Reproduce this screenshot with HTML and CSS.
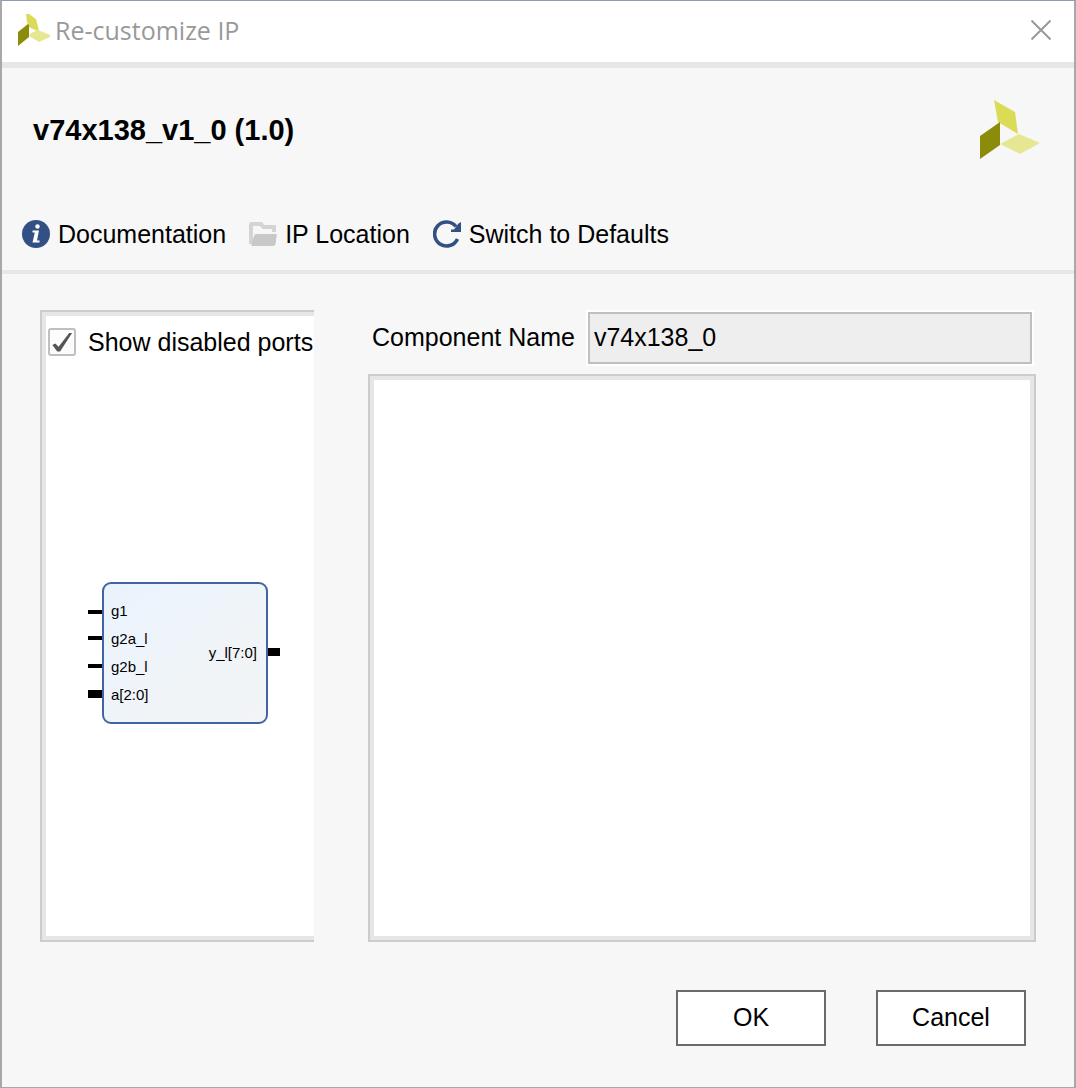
FILE: index.html
```html
<!DOCTYPE html>
<html lang="en">
<head>
    <meta charset="UTF-8">
    <meta name="viewport" content="width=device-width, initial-scale=1.0">
    <title>Re-customize IP</title>
    <link rel="stylesheet" href="styles.css">
</head>
<body>

    <div class="dialog">
        <!-- Title bar -->
        <div class="title-bar">
            <svg class="title-logo" viewBox="0 0 32 32" aria-hidden="true">
                <polygon points="8,0 11,0 18,5 21,17 19,17 11,13 9,8" fill="#dadc57"/>
                <polygon points="0,18 10,10 11,11 11,23 0,32" fill="#8c8c0b"/>
                <polygon points="11,22 13,19 20,16 32,21 32,23 21,28" fill="#e6e793"/>
            </svg>
            <span class="title-text">Re-customize IP</span>
            <button type="button" class="close-button" aria-label="Close">
                <svg width="20" height="20" viewBox="0 0 20 20" stroke="#999" stroke-width="2">
                    <path d="M0.5 0.5L19.5 19.5M19.5 0.5L0.5 19.5"/>
                </svg>
            </button>
        </div>

        <!-- IP name and toolbar -->
        <div class="header">
            <div class="header-top">
                <h1>v74x138_v1_0 (1.0)</h1>
                <svg width="60" height="60" viewBox="0 0 60 60" aria-hidden="true">
                    <polygon points="14,0 35,12 38,34 18,22" fill="#dadc57"/>
                    <polygon points="0,36 20,22 20,45 0,59" fill="#8c8c0b"/>
                    <polygon points="20,44 39,34 60,43 40,54" fill="#e6e793"/>
                </svg>
            </div>
            <div class="toolbar">
                <a href="#" class="tool">
                    <svg width="28" height="28" viewBox="0 0 28 28" aria-hidden="true">
                        <circle cx="14" cy="14" r="14" fill="#335084"/>
                        <circle cx="15.5" cy="6.5" r="2.2" fill="#fff"/>
                        <path d="M10.5 10.5H17L15 20.5H17.5V22.5H10.5L12.8 12.5H10.5Z" fill="#fff"/>
                    </svg>
                    Documentation
                </a>
                <a href="#" class="tool">
                    <svg width="28" height="28" viewBox="0 0 28 28" aria-hidden="true">
                        <path d="M2 24V5Q2 4 3 4H12L14.5 7H25V12" fill="none" stroke="#d4d4d4" stroke-width="4"/>
                        <path d="M7 14H27Q28 14 27.8 15L26.5 24Q26 26 24 26H3.5Q2 26 2.6 24L5 16Q5.5 14 7 14Z" fill="#c8c8c8"/>
                    </svg>
                    IP Location
                </a>
                <a href="#" class="tool">
                    <svg width="28" height="28" viewBox="0 0 28 28" aria-hidden="true">
                        <path d="M23 6.5A12 12 0 1 0 24.5 19" fill="none" stroke="#335084" stroke-width="3.6"/>
                        <path d="M28 2V12H18V9.5H21L25.5 3.5Z" fill="#335084"/>
                    </svg>
                    Switch to Defaults
                </a>
            </div>
        </div>

        <div class="content">
            <!-- Block symbol preview -->
            <div class="panel symbol-panel">
                <div class="panel-body">
                    <label class="check-row">
                        <input type="checkbox" checked>
                        Show disabled ports
                    </label>
                    <div class="symbol">
                        <svg width="192" height="142" viewBox="0 0 192 142">
                            <defs>
                                <linearGradient id="blockFill" x1="0" y1="0" x2="1" y2="1">
                                    <stop offset="0" stop-color="#e9f3fc"/>
                                    <stop offset="0.35" stop-color="#eef4fc"/>
                                    <stop offset="0.5" stop-color="#eff4f8"/>
                                    <stop offset="1" stop-color="#f2f4f6"/>
                                </linearGradient>
                            </defs>
                            <rect x="15" y="1" width="164" height="140" rx="8" fill="url(#blockFill)" stroke="#4264a4" stroke-width="2"/>
                            <rect x="0" y="28" width="14" height="4"/>
                            <rect x="0" y="54" width="14" height="4"/>
                            <rect x="0" y="82" width="14" height="4"/>
                            <rect x="0" y="108" width="14" height="8"/>
                            <rect x="180" y="66" width="12" height="8"/>
                            <text x="23" y="34">g1</text>
                            <text x="23" y="62">g2a_l</text>
                            <text x="23" y="90">g2b_l</text>
                            <text x="23" y="118">a[2:0]</text>
                            <text x="169" y="76" text-anchor="end">y_l[7:0]</text>
                        </svg>
                    </div>
                </div>
            </div>

            <!-- Component settings -->
            <div class="settings">
                <div class="name-row">
                    <label for="component-name">Component Name</label>
                    <input type="text" id="component-name" value="v74x138_0" readonly>
                </div>
                <div class="panel settings-panel">
                    <div class="panel-body"></div>
                </div>
            </div>
        </div>

        <div class="footer">
            <button type="button">OK</button>
            <button type="button">Cancel</button>
        </div>
    </div>

</body>
</html>
```
FILE: styles.css
```css
* {
    margin: 0;
    padding: 0;
    box-sizing: border-box;
}

body {
    font-family: "Liberation Sans", Arial, sans-serif;
    font-size: 25px;
    line-height: 30px;
    color: #000;
    background-color: #f7f7f7;
}

.dialog {
    display: flex;
    flex-direction: column;
    min-height: 100vh;
    border: 2px solid #a8a8a8;
    border-top: 1px solid #8f9bb3;
    border-bottom-width: 1px;
}

/* Title bar */
.title-bar {
    display: flex;
    align-items: center;
    height: 67px;
    padding: 0 23px 4px 16px;
    background-color: #fff;
    border-bottom: 6px solid #e6e6e6;
}

.title-logo {
    width: 32px;
    height: 32px;
}

.title-text {
    flex: 1;
    margin-left: 5px;
    font-family: "Open Sans", "Noto Sans", sans-serif;
    color: #999;
}

.close-button {
    display: flex;
    border: none;
    background: none;
}

/* Header */
.header {
    border-bottom: 4px solid #e6e6e6;
}

.header-top {
    display: flex;
    justify-content: space-between;
    padding: 32px 34px 0 31px;
}

h1 {
    font-size: 29px;
    line-height: 60px;
}

.toolbar {
    display: flex;
    gap: 23px;
    padding: 59px 20px 21px;
}

.tool {
    display: flex;
    align-items: center;
    gap: 8px;
    color: #000;
    text-decoration: none;
}

/* Content */
.content {
    flex: 1;
    display: flex;
    gap: 54px;
    padding: 36px 38px 48px;
}

.panel {
    display: flex;
    padding: 4px;
    background-color: #e6e6e6;
    border: 2px solid #ccc;
}

.panel-body {
    flex: 1;
    background-color: #fff;
}

.symbol-panel {
    flex: 0 0 274px;
    padding-right: 0;
    border-right: none;
}

.symbol-panel .panel-body {
    display: flex;
    flex-direction: column;
}

.check-row {
    display: flex;
    align-items: center;
    gap: 12px;
    padding: 11px 0 12px 2px;
    white-space: nowrap;
}

.check-row input {
    appearance: none;
    display: flex;
    width: 28px;
    height: 28px;
    border: 2px solid #bfbfbf;
    border-radius: 3px;
    background-color: #fcfcfc;
}

.check-row input:checked::before {
    content: "";
    width: 24px;
    height: 24px;
    background-color: #555;
    clip-path: polygon(10% 62%, 22% 56%, 36% 70%, 80% 12%, 92% 12%, 42% 90%, 30% 90%);
}

.symbol {
    flex: 1;
    display: flex;
    align-items: center;
    padding-left: 42px;
}

.symbol text {
    font-size: 15px;
}

.settings {
    flex: 1;
    display: flex;
    flex-direction: column;
    gap: 8px;
}

.name-row {
    display: flex;
    align-items: center;
    gap: 11px;
    padding: 0 2px 0 4px;
}

.name-row label {
    padding-bottom: 2px;
}

.name-row input {
    flex: 1;
    min-width: 0;
    height: 52px;
    margin: 2px;
    padding: 0 4px 2px;
    font: inherit;
    background-color: #eee;
    border: 2px solid #bfbfbf;
    outline: 2px solid #fff;
}

.settings-panel {
    flex: 1;
}

/* Footer */
.footer {
    display: flex;
    justify-content: flex-end;
    gap: 50px;
    padding: 0 48px 41px;
}

.footer button {
    width: 150px;
    height: 56px;
    padding-bottom: 2px;
    font: inherit;
    color: #000;
    background-color: #fff;
    border: 2px solid #6b6b6b;
}
```
